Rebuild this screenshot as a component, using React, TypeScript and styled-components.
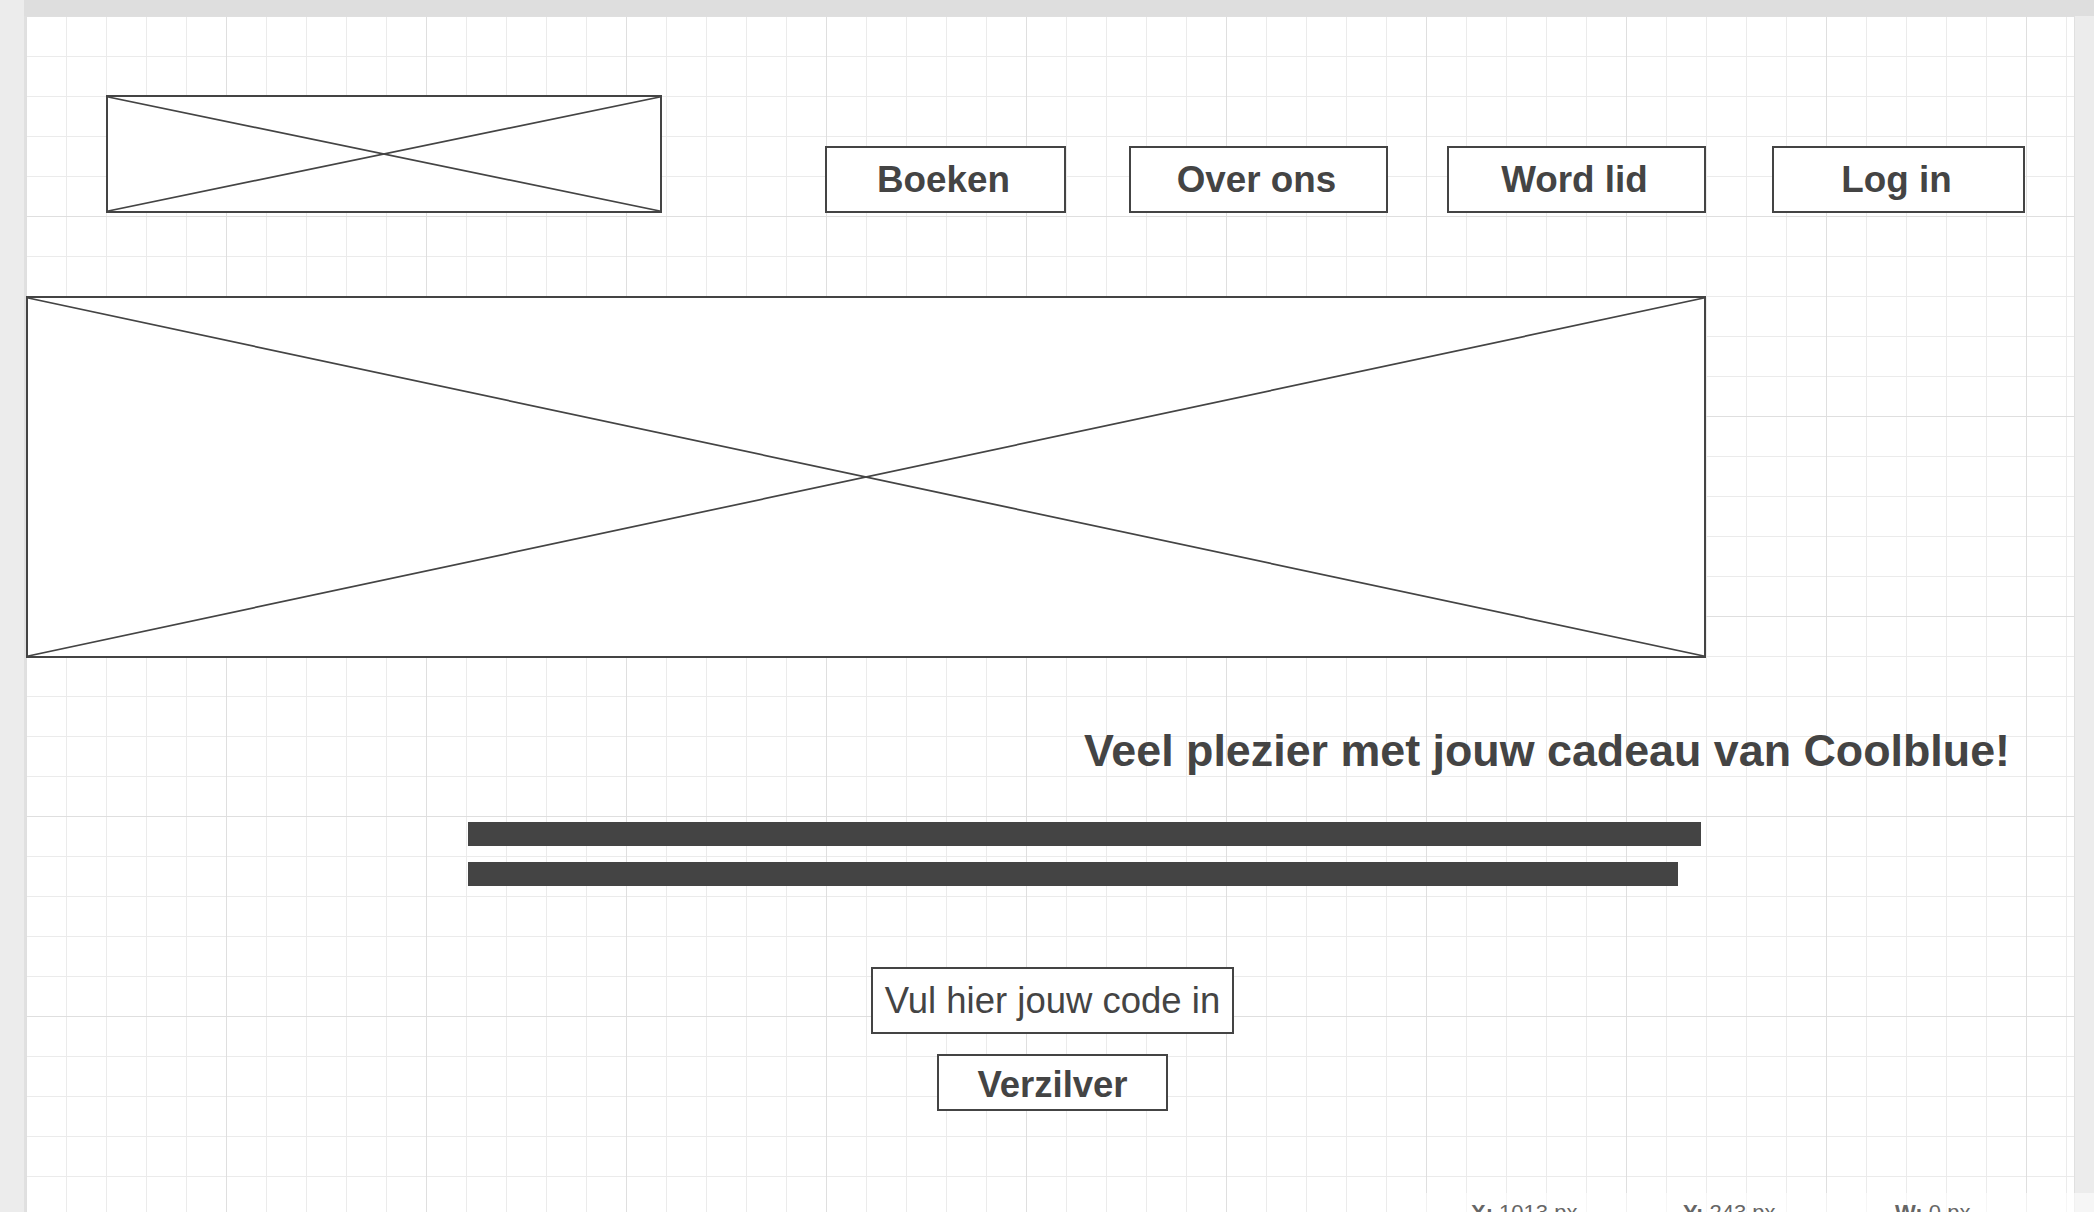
import * as React from "react";
import styled, { createGlobalStyle } from "styled-components";

const INK = "#444444";

const GlobalStyle = createGlobalStyle`
  html, body {
    margin: 0;
    padding: 0;
    overflow: hidden;
    font-family: "Liberation Sans", Arial, sans-serif;
  }
`;

const Page = styled.div`
  position: relative;
  display: flex;
  width: 100vw;
  height: 100vh;
  overflow: hidden;
`;

const LeftStrip = styled.div`
  width: 24px;
  flex: none;
  background: #ececec;
`;

const Column = styled.div`
  flex: 1;
  display: flex;
  flex-direction: column;
  min-width: 0;
`;

const TopBar = styled.div`
  height: 16px;
  flex: none;
  background: #dedede;
`;

const Workspace = styled.div`
  flex: 1;
  display: flex;
  min-height: 0;
`;

const Canvas = styled.main`
  flex: 1;
  display: flex;
  flex-direction: column;
  border-left: 2px solid #e0e0e0;
  background-color: #fff;
  background-image: linear-gradient(to right, #dfdfdf 1px, transparent 1px),
    linear-gradient(to bottom, #dfdfdf 1px, transparent 1px),
    linear-gradient(to right, #ebebeb 1px, transparent 1px),
    linear-gradient(to bottom, #ebebeb 1px, transparent 1px);
  background-size: 200px 200px, 200px 200px, 40px 40px, 40px 40px;
  background-position: 0 0;
`;

const RightStrip = styled.div`
  width: 19px;
  flex: none;
  background: #ececec;
  border-left: 1px solid #e0e0e0;
`;

const Header = styled.header`
  display: flex;
  align-items: flex-end;
  margin-top: 79px;
  padding-left: 80px;
`;

const Frame = styled.div<{ $w: number; $h: number }>`
  width: ${(p) => p.$w}px;
  height: ${(p) => p.$h}px;
  flex: none;
  box-sizing: border-box;
  border: 2px solid ${INK};
  background: #fff;
  svg {
    display: block;
    width: 100%;
    height: 100%;
  }
`;

const Nav = styled.nav`
  display: flex;
  margin-left: 163px;
`;

const NavButton = styled.button<{ $w: number; $ml?: number }>`
  width: ${(p) => p.$w}px;
  margin-left: ${(p) => p.$ml || 0}px;
  height: 67px;
  box-sizing: border-box;
  border: 2px solid ${INK};
  border-radius: 0;
  background: #fff;
  color: ${INK};
  font-family: "Liberation Sans", Arial, sans-serif;
  font-weight: 700;
  font-size: 36.8px;
  padding: 0 4px 0 0;
`;

const Hero = styled(Frame)`
  margin-top: 83px;
`;

const Heading = styled.h1`
  margin: 66px 64px 0 0;
  text-align: right;
  font-size: 44.8px;
  line-height: 52px;
  font-weight: 700;
  color: ${INK};
`;

const Bars = styled.div`
  display: flex;
  flex-direction: column;
  gap: 16px;
  margin-top: 46px;
  margin-left: 442px;
`;

const Bar = styled.div<{ $w: number }>`
  width: ${(p) => p.$w}px;
  height: 24px;
  background: ${INK};
`;

const Form = styled.div`
  display: flex;
  flex-direction: column;
  align-items: center;
  gap: 20px;
  width: 363px;
  margin-top: 81px;
  margin-left: 845px;
`;

const CodeField = styled.div`
  width: 363px;
  height: 67px;
  box-sizing: border-box;
  border: 2px solid ${INK};
  background: #fff;
  display: flex;
  align-items: center;
  justify-content: center;
  font-size: 36.5px;
  color: ${INK};
  white-space: nowrap;
`;

const RedeemButton = styled.button`
  width: 231px;
  height: 57px;
  box-sizing: border-box;
  border: 2px solid ${INK};
  border-radius: 0;
  background: #fff;
  color: ${INK};
  font-family: "Liberation Sans", Arial, sans-serif;
  font-weight: 700;
  font-size: 36.5px;
  padding: 4px 0 0;
`;

const StatusPanel = styled.div`
  position: absolute;
  left: 1400px;
  right: 0;
  top: 1193px;
  height: 40px;
  display: flex;
  box-sizing: border-box;
  padding: 7px 0 0 71px;
  background: rgba(255, 255, 255, 0.55);
`;

const StatusItem = styled.div`
  width: 212px;
  flex: none;
  font-size: 22px;
  line-height: 26px;
  color: #666;
  white-space: nowrap;
  b {
    font-weight: 700;
  }
`;

const Cross = () => (
  <svg viewBox="0 0 100 100" preserveAspectRatio="none">
    <line x1="0" y1="0" x2="100" y2="100" stroke={INK} strokeWidth="1.7" vectorEffect="non-scaling-stroke" />
    <line x1="100" y1="0" x2="0" y2="100" stroke={INK} strokeWidth="1.7" vectorEffect="non-scaling-stroke" />
  </svg>
);

const navItems = [
  { label: "Boeken", w: 241, ml: 0 },
  { label: "Over ons", w: 259, ml: 63 },
  { label: "Word lid", w: 259, ml: 59 },
  { label: "Log in", w: 253, ml: 66 },
];

const App: React.FC = () => {
  return (
    <Page>
      <GlobalStyle />
      <LeftStrip />
      <Column>
        <TopBar />
        <Workspace>
          <Canvas>
            <Header>
              <Frame $w={556} $h={118}>
                <Cross />
              </Frame>
              <Nav>
                {navItems.map((item) => (
                  <NavButton key={item.label} $w={item.w} $ml={item.ml}>
                    {item.label}
                  </NavButton>
                ))}
              </Nav>
            </Header>
            <Hero $w={1680} $h={362}>
              <Cross />
            </Hero>
            <Heading>Veel plezier met jouw cadeau van Coolblue!</Heading>
            <Bars>
              <Bar $w={1233} />
              <Bar $w={1210} />
            </Bars>
            <Form>
              <CodeField>Vul hier jouw code in</CodeField>
              <RedeemButton>Verzilver</RedeemButton>
            </Form>
          </Canvas>
          <RightStrip />
        </Workspace>
      </Column>
      <StatusPanel>
        <StatusItem>
          <b>X:</b> 1013 px
        </StatusItem>
        <StatusItem>
          <b>Y:</b> 243 px
        </StatusItem>
        <StatusItem>
          <b>W:</b> 0 px
        </StatusItem>
      </StatusPanel>
    </Page>
  );
};

export default App;
